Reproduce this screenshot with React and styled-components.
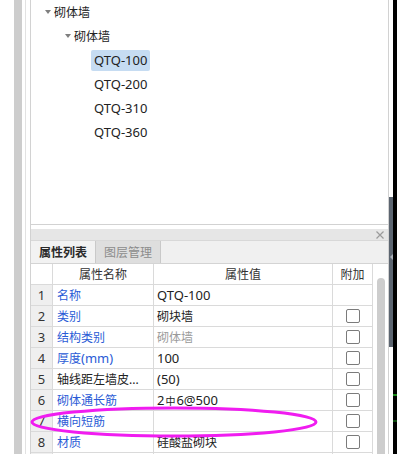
import React from 'react';
import styled, { createGlobalStyle } from 'styled-components';

const Global = createGlobalStyle`
  html, body { margin: 0; padding: 0; background: #fff; }
  body {
    font-family: "Noto Sans", "Noto Sans CJK SC", sans-serif;
    font-size: 12px;
    color: #222;
  }
  #root { width: 397px; height: 454px; overflow: hidden; }
`;

const Screen = styled.div`
  position: relative;
  display: flex;
  width: 397px;
  height: 454px;
  overflow: hidden;
  background: #fff;
`;

const Gutter = styled.div`
  flex: none;
  width: 14px;
  background: #fff;
`;

const Splitter = styled.div`
  flex: none;
  width: 8px;
  background: #cdcdcd;
`;

const Rail = styled.div`
  flex: none;
  width: 4px;
  margin-left: 3px;
  border-left: 1px solid #e2e2e2;
`;

const Main = styled.div`
  flex: none;
  width: 359px;
  box-sizing: border-box;
  display: flex;
  flex-direction: column;
  border-left: 1px solid #d2d2d2;
  border-right: 1px solid #d2d2d2;
`;

const TreePanel = styled.div`
  flex: none;
  height: 225px;
  box-sizing: border-box;
  border-bottom: 1px solid #d2d2d2;
  background: #fff;
`;

const Node = styled.div`
  display: flex;
  align-items: center;
  height: 24px;
  padding-left: ${(p) => 14 + p.$level * 20}px;
`;

const Caret = styled.span`
  flex: none;
  width: 9px;
  height: 24px;
  display: flex;
  align-items: center;
  &::before {
    content: "";
    display: ${(p) => (p.$open ? 'block' : 'none')};
    width: 0;
    height: 0;
    border-left: 3px solid transparent;
    border-right: 3px solid transparent;
    border-top: 4px solid #7f7f7f;
  }
`;

const Label = styled.span`
  display: inline-block;
  height: 21px;
  line-height: 21px;
  padding: 0 3px;
  margin-left: -3px;
  border-radius: 2px;
  color: #222;
  background: ${(p) => (p.$selected ? '#c6dcf2' : 'transparent')};
`;

const Lat = styled.span`
  font-family: "Noto Sans", sans-serif;
  font-size: 13px;
`;

const Gap = styled.div`
  flex: none;
  height: 4px;
  background: #fff;
`;

const TitleBar = styled.div`
  flex: none;
  height: 11px;
  display: flex;
  align-items: center;
  justify-content: flex-end;
  padding-right: 4px;
  background: #e6e6e6;
  border-bottom: 1px solid #d8d8d8;
`;

const TabRow = styled.div`
  flex: none;
  height: 22px;
  display: flex;
  background: #f0f0f0;
`;

const Tab = styled.div`
  width: 64px;
  box-sizing: content-box;
  border-right: 1px solid #c9c9c9;
  display: flex;
  align-items: center;
  justify-content: center;
  font-size: 12px;
  font-weight: ${(p) => (p.$active ? 700 : 400)};
  color: ${(p) => (p.$active ? '#2a2a2a' : '#8c8c8c')};
  background: ${(p) => (p.$active ? '#f2f2f2' : '#dedede')};
`;

const TableArea = styled.div`
  flex: 1;
  display: flex;
  border-top: 1px solid #d4d4d4;
  min-height: 0;
`;

const Table = styled.div`
  flex: none;
  width: 341px;
  display: flex;
  flex-direction: column;
`;

const Row = styled.div`
  flex: none;
  display: grid;
  grid-template-columns: 21px 100px 178px 39px;
  column-gap: 1px;
  height: 20px;
  background: #dadada;
  border-bottom: 1px solid #dadada;
`;

const NumCell = styled.div`
  display: flex;
  align-items: center;
  justify-content: center;
  background: ${(p) => (p.$head ? '#fff' : '#efefef')};
  color: #333;
  font-family: "Noto Sans", sans-serif;
  font-size: 13px;
`;

const HeadCell = styled.div`
  display: flex;
  align-items: center;
  justify-content: center;
  background: #fff;
  color: #333;
`;

const Cell = styled.div`
  display: flex;
  align-items: center;
  padding-left: ${(p) => (p.$value ? 3 : 4)}px;
  background: #fff;
  white-space: nowrap;
  overflow: hidden;
  color: ${(p) => p.$color || '#222'};
`;

const CheckCell = styled.div`
  display: flex;
  align-items: center;
  justify-content: center;
  background: #fff;
`;

const Box = styled.span`
  width: 12px;
  height: 12px;
  border: 1px solid #7b7b7b;
  border-radius: 2px;
  background: #fff;
`;

const Rebar = styled.span`
  font-family: "Noto Sans CJK SC", sans-serif;
  font-size: 10px;
  margin: 0 1px;
`;

const ScrollCol = styled.div`
  flex: 1;
  border-left: 1px solid #dadada;
  background: #fff;
  padding: 14px 3px 0 4px;
`;

const Thumb = styled.div`
  height: 100%;
  border-radius: 4px 4px 0 0;
  background: #cdcdcd;
`;

const RightEdge = styled.div`
  position: relative;
  flex: none;
  width: 4px;
  display: flex;
  flex-direction: column;
  background: #fff;
`;

const SlateBar = styled.div`
  flex: none;
  margin-top: 197px;
  height: 150px;
  background: #5c6570;
  display: flex;
  justify-content: center;
  padding-top: 57px;
  box-sizing: border-box;
  &::before {
    content: "";
    width: 0;
    height: 0;
    border-top: 3px solid transparent;
    border-bottom: 3px solid transparent;
    border-right: 3px solid #a9b0b8;
  }
`;

const BlackEdge = styled.div`
  flex: none;
  width: 4px;
  background: #000;
  display: flex;
  flex-direction: column;
`;

const GreenMark = styled.div`
  flex: none;
  height: 2px;
  margin-top: ${(p) => p.$top}px;
  background: ${(p) => p.$color};
`;

const Overlay = styled.svg`
  position: absolute;
  left: 0;
  top: 0;
  pointer-events: none;
`;

const tree = [
  { level: 0, open: true, text: '砌体墙' },
  { level: 1, open: true, text: '砌体墙' },
  { level: 2, text: 'QTQ-100', latin: true, selected: true },
  { level: 2, text: 'QTQ-200', latin: true },
  { level: 2, text: 'QTQ-310', latin: true },
  { level: 2, text: 'QTQ-360', latin: true },
];

const BLUE = '#2a5bd6';

const rows = [
  { id: 1, n: 1, name: '名称', blue: true, value: <Lat>QTQ-100</Lat>, check: false },
  { id: 2, n: 2, name: '类别', blue: true, value: '砌块墙', check: true },
  { id: 3, n: 3, name: '结构类别', blue: true, value: '砌体墙', gray: true, check: true },
  { id: 4, n: 4, name: <>厚度<Lat>(mm)</Lat></>, blue: true, value: <Lat>100</Lat>, check: true },
  { id: 5, n: 5, name: '轴线距左墙皮...', blue: false, value: <Lat>(50)</Lat>, check: true },
  { id: 6, n: 6, name: '砌体通长筋', blue: true, value: <Lat>2<Rebar>中</Rebar>6@500</Lat>, check: true },
  { id: 7, n: 7, name: '横向短筋', blue: true, value: '', check: true },
  { id: 8, n: 8, name: '材质', blue: true, value: '硅酸盐砌块', check: true },
  { id: 9, n: '', name: '', blue: true, value: '', check: false },
];

function CloseIcon() {
  return (
    <svg width="8" height="8" viewBox="0 0 8 8">
      <path d="M0.5 0.5 L7.5 7.5 M7.5 0.5 L0.5 7.5" stroke="#9b9b9b" strokeWidth="1.2" fill="none" />
    </svg>
  );
}

export default function App() {
  return (
    <>
      <Global />
      <Screen>
        <Gutter />
        <Splitter />
        <Rail />
        <Main>
          <TreePanel>
            {tree.map((t, i) => (
              <Node key={i} $level={t.level}>
                <Caret $open={t.open} />
                <Label $selected={t.selected}>{t.latin ? <Lat>{t.text}</Lat> : t.text}</Label>
              </Node>
            ))}
          </TreePanel>
          <Gap />
          <TitleBar>
            <CloseIcon />
          </TitleBar>
          <TabRow>
            <Tab $active>属性列表</Tab>
            <Tab>图层管理</Tab>
          </TabRow>
          <TableArea>
            <Table>
              <Row>
                <NumCell $head />
                <HeadCell>属性名称</HeadCell>
                <HeadCell>属性值</HeadCell>
                <HeadCell>附加</HeadCell>
              </Row>
              {rows.map((r) => (
                <Row key={r.id}>
                  <NumCell>{r.n}</NumCell>
                  <Cell $color={r.blue ? BLUE : '#222'}>{r.name}</Cell>
                  <Cell $value $color={r.gray ? '#9a9a9a' : '#222'}>{r.value}</Cell>
                  <CheckCell>{r.check && <Box />}</CheckCell>
                </Row>
              ))}
            </Table>
            <ScrollCol>
              <Thumb />
            </ScrollCol>
          </TableArea>
        </Main>
        <RightEdge>
          <SlateBar />
        </RightEdge>
        <BlackEdge>
          <GreenMark $top={394} $color="#1c8a1c" />
          <GreenMark $top={24} $color="#0e4a0e" />
        </BlackEdge>
        <Overlay width="397" height="454" viewBox="0 0 397 454">
          <ellipse cx="174" cy="422" rx="142" ry="14" fill="none" stroke="#f01cf0" strokeWidth="3" />
        </Overlay>
      </Screen>
    </>
  );
}
